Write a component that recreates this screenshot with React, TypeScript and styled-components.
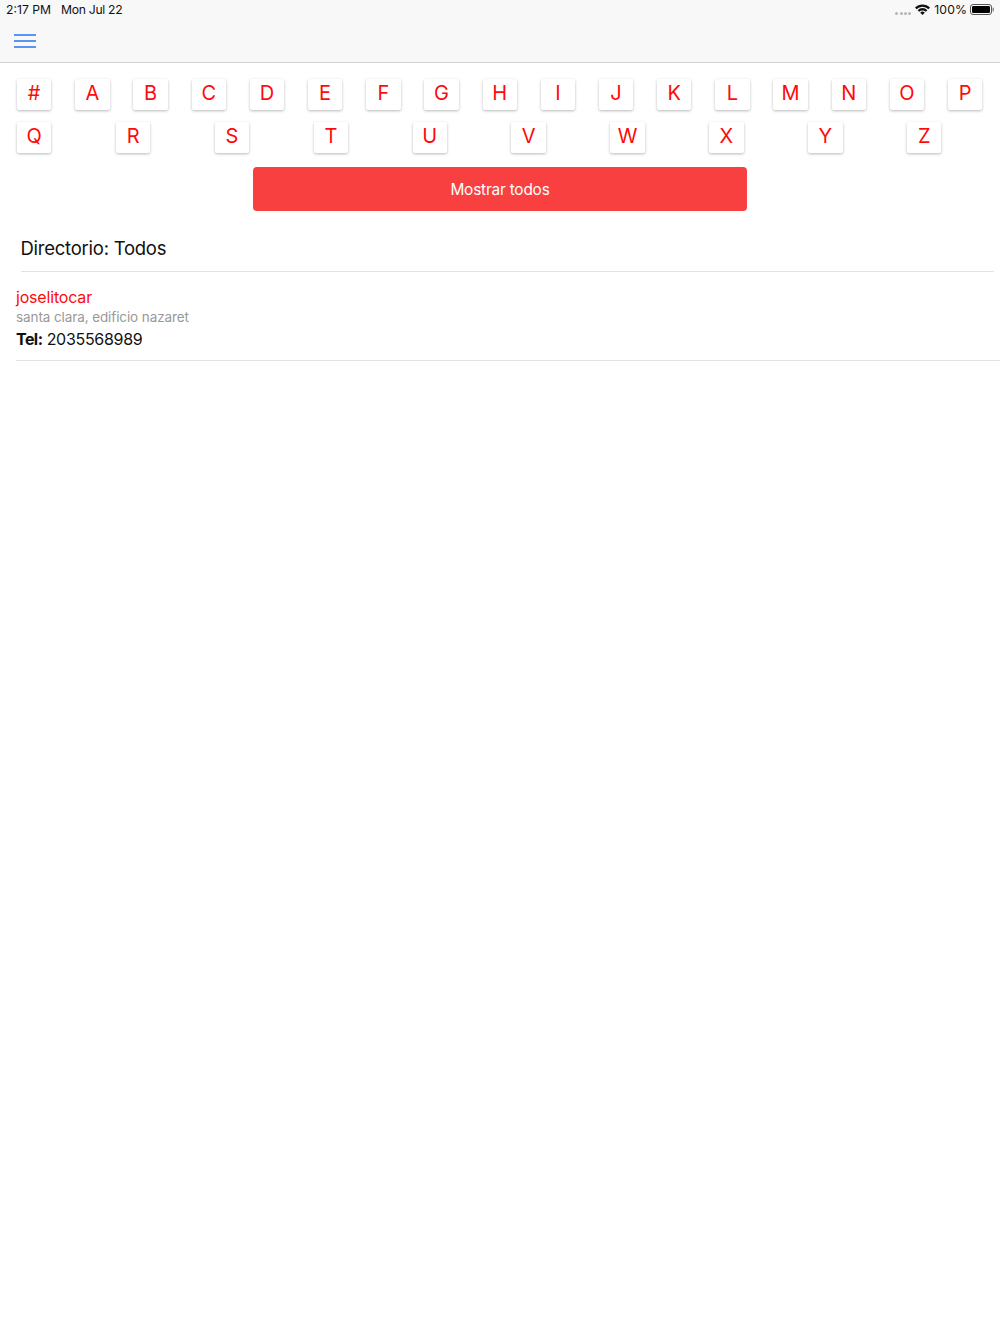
import styled, { createGlobalStyle } from "styled-components";

const GlobalStyle = createGlobalStyle`
  html, body {
    margin: 0;
    padding: 0;
    background: #fff;
    font-family: Inter, "Liberation Sans", sans-serif;
  }
`;

const Page = styled.div`
  width: 1000px;
  height: 1334px;
  overflow: hidden;
`;

const Header = styled.header`
  height: 62px;
  background: #f8f8f8;
  border-bottom: 1px solid #cfcfcf;
`;

const StatusBar = styled.div`
  height: 19px;
  padding: 0 5px 0 6px;
  display: flex;
  align-items: center;
  justify-content: space-between;
  font-size: 12.2px;
  color: #111;
`;

const StatusGroup = styled.div`
  display: flex;
  align-items: center;
  gap: ${(props: { $gap: number }) => props.$gap}px;
`;

const DateText = styled.span`
  letter-spacing: -0.3px;
`;

const BatteryLevel = styled.span`
  margin-right: -1px;
  letter-spacing: 0.1px;
`;

const Dots = styled.div`
  display: flex;
  gap: 1.3px;
  margin: 7px 0 0 0;
`;

const Dot = styled.span`
  width: 3px;
  height: 3px;
  border-radius: 50%;
  background: #b5b5b5;
`;

const MenuButton = styled.button`
  display: flex;
  flex-direction: column;
  gap: 4px;
  width: 22px;
  margin: 15px 0 0 14px;
  padding: 0;
  border: 0;
  background: none;
`;

const MenuLine = styled.span`
  height: 2px;
  background: #5a95f5;
`;

const KeyRow = styled.div<{ $gap: number; $top: number }>`
  display: flex;
  gap: ${(props) => props.$gap}px;
  margin: ${(props) => props.$top}px 0 0 17px;
`;

const Key = styled.button`
  width: 34.4px;
  height: 31px;
  flex: none;
  padding: 0 0 3px;
  border: 0;
  border-radius: 2px;
  background: #fff;
  box-shadow: 0 1px 3px rgba(0, 0, 0, 0.28);
  color: #ff0a0a;
  font-family: inherit;
  font-size: 20px;
  line-height: 27px;
`;

const ShowAll = styled.button`
  display: block;
  width: 494.6px;
  height: 44px;
  margin: 14px auto 0;
  border: 0;
  border-radius: 4px;
  background: #f94040;
  color: #fff;
  font-family: inherit;
  font-size: 15.4px;
  letter-spacing: -0.2px;
`;

const Title = styled.h2`
  margin: 25px 6px 0 20.5px;
  padding-bottom: 11px;
  border-bottom: 1px solid #e2e2e2;
  font-size: 18.5px;
  font-weight: 400;
  line-height: 24px;
  letter-spacing: -0.25px;
  color: #111;
`;

const Entry = styled.div`
  margin: 15px 0 0 16px;
  padding-bottom: 11px;
  border-bottom: 1px solid #e2e2e2;
`;

const Name = styled.div`
  font-size: 16px;
  line-height: 20px;
  letter-spacing: -0.18px;
  color: #ff0a0a;
`;

const Address = styled.div`
  margin-top: 1px;
  font-size: 13.5px;
  line-height: 18px;
  letter-spacing: -0.1px;
  color: #999;
`;

const Phone = styled.div`
  margin-top: 3px;
  font-size: 16px;
  line-height: 20px;
  letter-spacing: -0.3px;
  color: #111;
`;

const PhoneLabel = styled.b`
  letter-spacing: -0.55px;
`;

const rowOne = "#ABCDEFGHIJKLMNOP".split("");
const rowTwo = "QRSTUVWXYZ".split("");

export default function App() {
  return (
    <Page>
      <GlobalStyle />
      <Header>
        <StatusBar>
          <StatusGroup $gap={10}>
            <span>2:17 PM</span>
            <DateText>Mon Jul 22</DateText>
          </StatusGroup>
          <StatusGroup $gap={4}>
            <Dots>
              <Dot />
              <Dot />
              <Dot />
              <Dot />
            </Dots>
            <svg width="15" height="11" viewBox="0 0 15 11">
              <path d="M0 3.6 A10.5 10.5 0 0 1 15 3.6 L13.4 5.2 A8.2 8.2 0 0 0 1.6 5.2 Z" fill="#111" />
              <path d="M2.6 6.2 A6.8 6.8 0 0 1 12.4 6.2 L10.8 7.8 A4.6 4.6 0 0 0 4.2 7.8 Z" fill="#111" />
              <path d="M5.2 8.7 A3.2 3.2 0 0 1 9.8 8.7 L7.5 11 Z" fill="#111" />
            </svg>
            <BatteryLevel>100%</BatteryLevel>
            <svg width="25" height="11" viewBox="0 0 25 11">
              <rect x="0.5" y="0.5" width="21" height="10" rx="2.5" fill="none" stroke="#555" />
              <rect x="2" y="2" width="18" height="7" rx="1.2" fill="#000" />
              <rect x="22.6" y="3.5" width="1.2" height="4" rx="0.6" fill="#777" />
            </svg>
          </StatusGroup>
        </StatusBar>
        <MenuButton aria-label="Menu">
          <MenuLine />
          <MenuLine />
          <MenuLine />
        </MenuButton>
      </Header>
      <KeyRow $gap={23.8} $top={16}>
        {rowOne.map((letter) => (
          <Key key={letter}>{letter}</Key>
        ))}
      </KeyRow>
      <KeyRow $gap={64.5} $top={12}>
        {rowTwo.map((letter) => (
          <Key key={letter}>{letter}</Key>
        ))}
      </KeyRow>
      <ShowAll>Mostrar todos</ShowAll>
      <Title>Directorio: Todos</Title>
      <Entry>
        <Name>joselitocar</Name>
        <Address>santa clara, edificio nazaret</Address>
        <Phone>
          <PhoneLabel>Tel:</PhoneLabel> 2035568989
        </Phone>
      </Entry>
    </Page>
  );
}
